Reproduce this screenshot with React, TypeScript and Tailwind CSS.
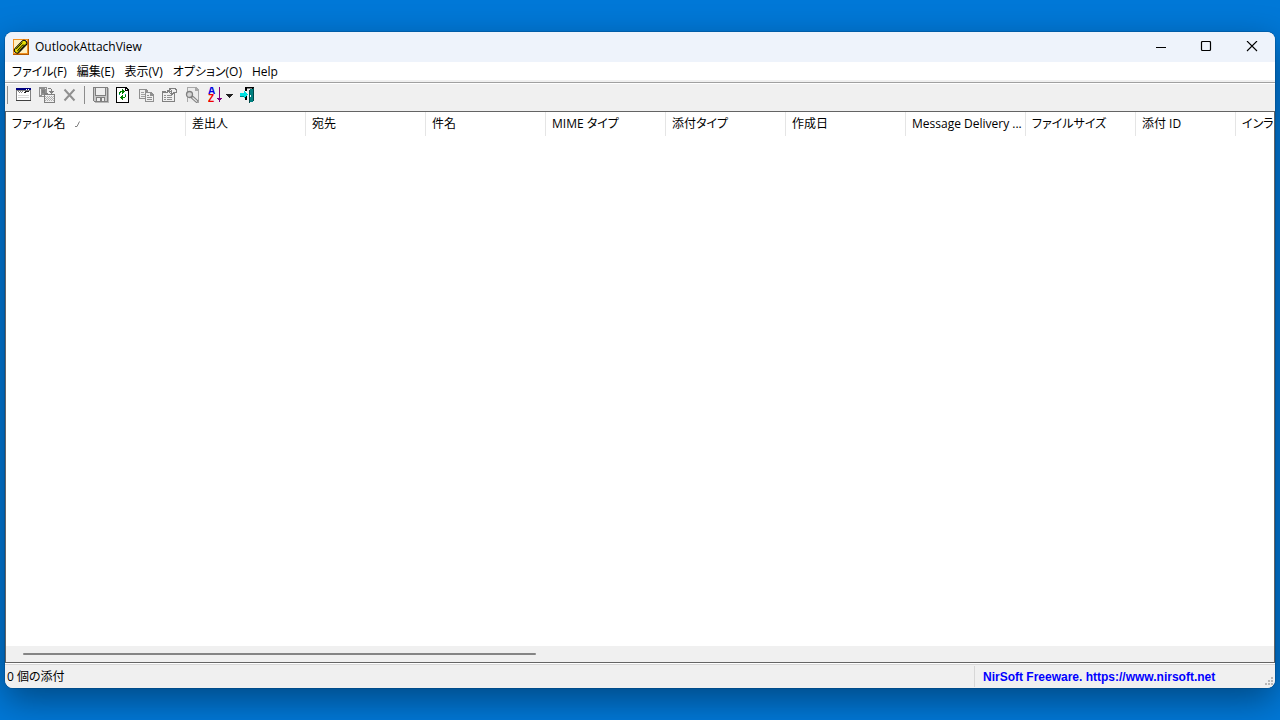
import React from "react";
import type { ReactNode } from "react";

type ColumnProps = {
    title: string;
    width: string;
    sorted?: boolean;
};

type ToolButtonProps = {
    label: string;
    children: ReactNode;
    disabled?: boolean;
    wide?: boolean;
};

const menus = ["ファイル(F)", "編集(E)", "表示(V)", "オプション(O)", "Help"];

const columns: ColumnProps[] = [
    { title: "ファイル名", width: "w-[180px]", sorted: true },
    { title: "差出人", width: "w-[120px]" },
    { title: "宛先", width: "w-[120px]" },
    { title: "件名", width: "w-[120px]" },
    { title: "MIME タイプ", width: "w-[120px]" },
    { title: "添付タイプ", width: "w-[120px]" },
    { title: "作成日", width: "w-[120px]" },
    { title: "Message Delivery ...", width: "w-[120px]" },
    { title: "ファイルサイズ", width: "w-[110px]" },
    { title: "添付 ID", width: "w-[100px]" },
    { title: "インライン", width: "w-[100px]" },
];

const Icon: React.FC<{ children: ReactNode; size?: number }> = ({ children, size = 16 }) => (
    <svg
        width={size}
        height={size}
        viewBox={`0 0 ${size} ${size}`}
        fill="none"
        shapeRendering="crispEdges"
        className="shrink-0"
        aria-hidden="true"
    >
        {children}
    </svg>
);

const AppIcon = () => (
    <Icon>
        <rect width="16" height="16" fill="#f09020" />
        <path d="M1 1h13v13H1z" fill="#fff0c0" />
        <path d="M0 15h16v1H0zM15 0h1v16h-1z" fill="#b05800" />
        <g shapeRendering="auto" strokeLinecap="round" strokeLinejoin="round">
            <path d="M4.2 11.2L11 4.2" stroke="#000" strokeWidth="6.6" />
            <path d="M4.2 11.2L11 4.2" stroke="#e8e000" strokeWidth="4.8" />
            <path d="M3.4 9.8L9 3.9M5 12.6L12.4 5.4M4.6 11.4L9.4 6.2" stroke="#000" strokeWidth=".9" />
            <path d="M9.4 6.2c1-1 2.2.2 1.3 1.2L7.4 11" stroke="#000" strokeWidth=".7" />
        </g>
    </Icon>
);

const WindowIcon = () => (
    <Icon>
        <path d="M0 1h15v13H0z" fill="#808080" />
        <path d="M1 4h13v9H1z" fill="#fff" />
        <path d="M0 1h15v2H0z" fill="#000080" />
        <path d="M10 2h1v1h-1zM12 2h1v1h-1z" fill="#fff" />
        <path d="M2 4h1v1H2zM4 4h1v1H4zM6 4h1v1H6zM3 5h1v1H3zM5 5h1v1H5z" fill="#808080" />
        <path d="M9 4h4v1H9zM8 5h2v1H8z" fill="#202020" />
        <path d="M0 13h15v1H0z" fill="#404040" />
        <path d="M2 8h11v1H2zM2 10h11v1H2z" fill="#d8d8d8" />
    </Icon>
);

const CopyFilesIcon = () => (
    <Icon>
        <path d="M0 0h8v10H0z" fill="#909090" />
        <path d="M1 2h1v6H1zM6 1h1v1H6zM3 8h3v1H3z" fill="#efefef" />
        <path d="M3 3h3v3H3z" fill="#808080" />
        <path d="M9 1h3v1H9zM12 2h1v3h-1zM10 4h5v1h-5zM11 5h3v1h-3zM12 6h1v1h-1z" fill="#808080" />
        <path d="M5 6h4v1h7v9H5z" fill="#808080" />
        <path d="M6 8h9v7H6z" fill="#efefef" />
        <path
            d="M6 9h1v1H6zM8 9h1v1H8zM10 9h1v1h-1zM12 9h1v1h-1zM14 9h1v1h-1zM7 10h1v1H7zM9 10h1v1H9zM11 10h1v1h-1zM13 10h1v1h-1zM6 11h1v1H6zM8 11h1v1H8zM10 11h1v1h-1zM12 11h1v1h-1zM14 11h1v1h-1zM7 12h1v1H7zM9 12h1v1H9zM11 12h1v1h-1zM13 12h1v1h-1zM6 13h1v1H6zM8 13h1v1H8zM10 13h1v1h-1zM12 13h1v1h-1zM14 13h1v1h-1z"
            fill="#b0b0b0"
        />
    </Icon>
);

const DeleteIcon = () => (
    <Icon>
        <g shapeRendering="auto">
            <path d="M3.5 3.5l9 10M13 3l-10 10.5" stroke="#fff" strokeWidth="1.5" />
            <path d="M2.5 2.5l10 11M12.5 2.5l-10 11" stroke="#909090" strokeWidth="2" />
        </g>
    </Icon>
);

const SaveIcon = () => (
    <Icon>
        <path d="M1 1h15v15H2v-1H1z" fill="#b8b8b8" />
        <path d="M0 0h15v15H1v-1H0z" fill="#808080" />
        <path d="M1 1h13v13H1z" fill="#c8c8c8" />
        <path d="M2 1h1v7h9V1h1v8H2z" fill="#808080" />
        <path d="M3 1h9v7H3z" fill="#efefef" />
        <path d="M3 10h9v4H3z" fill="#808080" />
        <path d="M4 11h3v3H4zM9 11h2v3H9z" fill="#efefef" />
    </Icon>
);

const RefreshIcon = () => (
    <Icon>
        <path d="M0 0h10l3 3v13H0z" fill="#000" />
        <path d="M1 1h8v3h3v11H1z" fill="#fff" />
        <path d="M10 2l1 1h-1z" fill="#fff" />
        <path d="M6 2h1v1h1v1h1v1H8v1H7v1H6V5H5v1H4v2H3V5h1V4h2z" fill="#008000" />
        <path d="M9 7h1v3H9v1H7v2H6v-1H5v-1H4v-1h1V9h1V8h1v2h2z" fill="#008000" />
        <path d="M3 7h1v1H3zM9 7h1v1H9z" fill="#00a0a0" />
    </Icon>
);

const CopyIcon = () => (
    <Icon>
        <path d="M0 2h7l2 2v8H0z" fill="#909090" />
        <path d="M1 3h5v2h2v6H1z" fill="#efefef" />
        <path d="M2 5h3v1H2zM2 7h5v1H2zM2 9h5v1H2z" fill="#a0a0a0" />
        <path d="M6 5h6l3 3v7H6z" fill="#909090" />
        <path d="M7 6h4v3h3v5H7z" fill="#efefef" />
        <path d="M8 8h2v1H8zM8 10h5v1H8zM8 12h5v1H8z" fill="#909090" />
    </Icon>
);

const PropertiesIcon = () => (
    <Icon>
        <path d="M0 4h13v11H0z" fill="#808080" />
        <path d="M1 6h11v8H1z" fill="#efefef" />
        <path d="M2 8h2v1H2zM5 8h5v1H5zM2 10h2v1H2zM5 10h5v1H5zM2 12h2v1H2zM5 12h5v1H5z" fill="#909090" />
        <path d="M7 1h7v1h1v4h-2v1h-2v1H9V7H8V6H7V5H6V4H5V3h2z" fill="#808080" />
        <path d="M9 2h4v1H9zM8 3h1v1H8zM10 3h4v2h-4zM8 5h1v1H8zM10 5h1v1h-1zM4 4h1v1H4zM6 5h1v1H6z" fill="#efefef" />
    </Icon>
);

const FindIcon = () => (
    <Icon>
        <path d="M2 0h9l3 3v13h-3v-1H2z" fill="#a8a8a8" />
        <path d="M3 1h7v3h3v11H3z" fill="#ececec" />
        <g shapeRendering="auto">
            <circle cx="4.5" cy="7.5" r="3" fill="#d4d4d4" stroke="#808080" strokeWidth="1.3" />
            <path d="M6.5 9.5l6 5.5" stroke="#808080" strokeWidth="3.2" />
            <path d="M7.5 10.5l4.5 4" stroke="#e8e8e8" strokeWidth="1.2" />
        </g>
    </Icon>
);

const SortIcon = () => (
    <Icon>
        <g fontFamily="Liberation Sans, sans-serif" fontWeight="700" fontSize="10">
            <text x="0" y="7" fill="#0000e0">
                A
            </text>
            <text x="0" y="15" fill="#f00000">
                Z
            </text>
        </g>
        <path d="M11 0h1v11h2v1h-1v1h-1v2h-1v-2h-1v-1H9v-1h2z" fill="#800080" />
    </Icon>
);

const ExitIcon = () => (
    <Icon>
        <path d="M5 0h9v13h-2V2H7v2H5z" fill="#000" />
        <path d="M5 9h2v4H5z" fill="#000" />
        <path d="M7 1h5v1H7z" fill="#808080" />
        <path d="M9 3l5-2v13l-5 2z" fill="#008080" />
        <path d="M9 3h1v13H9zM13 1h1v13h-1z" fill="#004848" />
        <path d="M10 8h1v2h-1z" fill="#fff" />
        <path d="M0 6h4V4h1v1h1v1h1v1h1v1H7v1H6v1H5v1H4V9H0z" fill="#00e0e0" />
        <path d="M0 9h4v1H0z" fill="#008080" />
    </Icon>
);

const ToolButton: React.FC<ToolButtonProps> = ({ label, children, disabled, wide }) => (
    <button
        aria-label={label}
        title={label}
        disabled={disabled}
        className={`flex h-[22px] items-center gap-0.5 pl-1 ${wide ? "w-8" : "w-[23px]"}`}
    >
        {children}
    </button>
);

const Separator = () => <span className="h-[18px] w-px bg-[#8c8c8c]"></span>;

const TitleBar = () => (
    <header className="flex h-[30px] shrink-0 items-center bg-[#eef3fb] pl-2">
        <AppIcon />
        <h1 className="flex-1 pl-1.5">OutlookAttachView</h1>
        <button aria-label="最小化" className="flex h-full w-[46px] items-center justify-center">
            <Icon size={12}>
                <path d="M1 6.5h10" stroke="#000" />
            </Icon>
        </button>
        <button aria-label="最大化" className="flex h-full w-11 items-center justify-center">
            <svg width="12" height="12" viewBox="0 0 12 12" fill="none">
                <rect x="1.5" y=".5" width="9" height="9" rx="1" stroke="#000" strokeWidth="1.2" />
            </svg>
        </button>
        <button aria-label="閉じる" className="flex h-full w-[47px] items-center justify-center">
            <svg width="12" height="12" viewBox="0 0 12 12" fill="none">
                <path d="M1 0l10 10M11 0L1 10" stroke="#000" strokeWidth="1.1" />
            </svg>
        </button>
    </header>
);

const MenuBar = () => (
    <nav className="flex h-5 shrink-0 items-end border-b-2 border-[#f0f0f0] bg-white pl-0.5">
        {menus.map((menu) => (
            <button key={menu} className="px-[5px]">
                {menu}
            </button>
        ))}
    </nav>
);

const Toolbar = () => (
    <div
        role="toolbar"
        className="flex h-[29px] shrink-0 items-start border-t border-[#a0a0a0] bg-[#f0f0f0] pl-0.5 shadow-[inset_0_1px_0_#ffffff]"
    >
        <div className="flex h-6 items-center">
            <Separator />
            <div className="flex pl-1">
                <ToolButton label="プロパティ">
                    <WindowIcon />
                </ToolButton>
                <ToolButton label="添付ファイルをコピー" disabled>
                    <CopyFilesIcon />
                </ToolButton>
                <ToolButton label="削除" disabled>
                    <DeleteIcon />
                </ToolButton>
            </div>
            <div className="flex w-2 pl-[3px]">
                <Separator />
            </div>
            <ToolButton label="保存" disabled>
                <SaveIcon />
            </ToolButton>
            <ToolButton label="更新">
                <RefreshIcon />
            </ToolButton>
            <ToolButton label="コピー" disabled>
                <CopyIcon />
            </ToolButton>
            <ToolButton label="詳細" disabled>
                <PropertiesIcon />
            </ToolButton>
            <ToolButton label="検索" disabled>
                <FindIcon />
            </ToolButton>
            <ToolButton label="並べ替え" wide>
                <SortIcon />
                <Icon size={7}>
                    <path d="M0 2h7v1H6v1H5v1H4v1H3V5H2V4H1V3H0z" fill="#202020" />
                </Icon>
            </ToolButton>
            <ToolButton label="終了">
                <ExitIcon />
            </ToolButton>
        </div>
    </div>
);

const AttachmentList = () => (
    <main className="flex min-h-0 flex-1 flex-col border border-[#646464] bg-white">
        <div className="min-h-0 flex-1 overflow-hidden">
            <table className="w-[1330px] table-fixed border-separate border-spacing-0">
                <thead>
                    <tr>
                        {columns.map(({ title, width, sorted }) => (
                            <th
                                key={title}
                                scope="col"
                                className={`h-6 border-r border-[#e5e5e5] p-0 pl-1.5 text-left font-normal whitespace-nowrap ${width}`}
                            >
                                <span className="flex items-center gap-2">
                                    {title}
                                    {sorted && (
                                        <svg width="8" height="8" viewBox="0 0 8 8" fill="none" aria-hidden="true">
                                            <path d="M1 6.5h2L5.5 1.5" stroke="#808080" />
                                        </svg>
                                    )}
                                </span>
                            </th>
                        ))}
                    </tr>
                </thead>
                <tbody></tbody>
            </table>
        </div>
        <div className="flex h-4 shrink-0 items-center bg-[#f0f0f0] pl-[17px]">
            <div className="h-0.5 w-[41%] rounded-full bg-[#858585]"></div>
        </div>
    </main>
);

const StatusBar = () => (
    <footer className="flex h-[25px] shrink-0 items-end border-t border-white bg-[#f0f0f0]">
        <div className="flex h-6 w-full items-center border-t border-[#d7d7d7]">
            <span className="flex-1 pl-0.5">0 個の添付</span>
            <div className="flex h-[21px] w-[301px] items-center justify-between border-l border-[#d7d7d7] pl-2">
                <a href="https://www.nirsoft.net" className="font-[Liberation_Sans,sans-serif] font-bold text-[#0000ff]">
                    NirSoft Freeware. https://www.nirsoft.net
                </a>
                <span className="self-end">
                    <Icon size={10}>
                        <path d="M6 0h2v2H6zM3 3h2v2H3zM6 3h2v2H6zM0 6h2v2H0zM3 6h2v2H3zM6 6h2v2H6z" fill="#b8b8b8" />
                    </Icon>
                </span>
            </div>
        </div>
    </footer>
);

const App: React.FC = () => {
    return (
        <div className="flex h-screen overflow-hidden bg-[#0078d7] px-[5px] py-8 font-[Open_Sans,Noto_Sans_CJK_JP,sans-serif] text-xs text-black [font-feature-settings:'palt']">
            <div className="flex min-w-0 flex-1 flex-col overflow-hidden rounded-lg bg-[#f0f0f0] shadow-[0_0_0_1px_rgba(0,60,110,0.3),0_12px_36px_rgba(0,0,0,0.4)]">
                <TitleBar />
                <MenuBar />
                <Toolbar />
                <AttachmentList />
                <StatusBar />
            </div>
        </div>
    );
};

export default App;
